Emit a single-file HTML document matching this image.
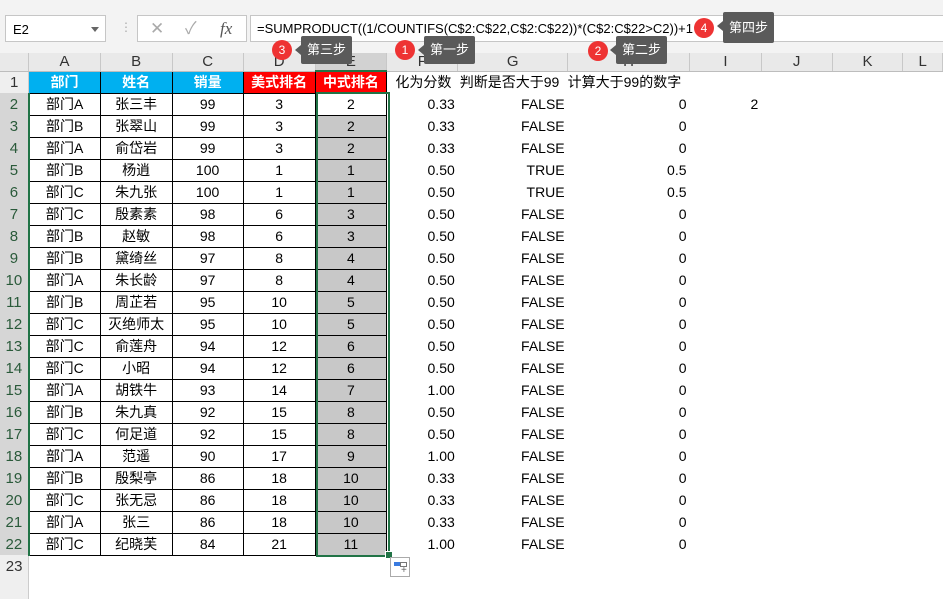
<html><head><style>
body{margin:0;width:943px;height:583px;overflow:hidden;background:#fff;font-family:"Liberation Sans","Noto Sans CJK SC",sans-serif;position:relative}
.top{position:absolute;left:0;top:0;width:943px;height:53px;background:#f3f3f3}
.nb{position:absolute;left:5px;top:15px;width:101px;height:27px;background:#fff;border:1px solid #c6c6c6;font-size:13px;line-height:27px;box-sizing:border-box;padding-left:7px}
.nb:after{content:"";position:absolute;right:6px;top:11px;border:4px solid transparent;border-top:5px solid #666}
.fx{position:absolute;left:137px;top:15px;width:110px;height:27px;background:#fff;border:1px solid #c6c6c6;box-sizing:border-box;color:#aaa;font-size:17px;line-height:25px}
.fb{position:absolute;left:250px;top:15px;width:700px;height:27px;background:#fff;border:1px solid #c6c6c6;box-sizing:border-box;font-size:13px;line-height:25px;padding-left:6px}
table{position:absolute;left:0;top:53px;border-collapse:collapse;table-layout:fixed;font-size:14px}
tr{height:22px}
td{border:0;padding:0 3px;white-space:nowrap;overflow:visible}
tr.h{height:18px}
tr.h td{background:#e9e9e9;text-align:center;color:#333;border-right:1px solid #c8c8c8;border-bottom:1px solid #bdbdbd;font-size:15px;line-height:17px}
td.r{background:#d6d6d6;text-align:center;color:#2a5a3a;font-size:15px;padding:0;border-right:2px solid #217346}
td.r2{background:#efefef;text-align:center;color:#333;font-size:15px;padding:0;border-right:1px solid #ccc}
td.b{border:1px solid #000;text-align:center}
td.bl{background:#00b0f0;color:#fff;font-weight:bold}
td.rd{background:#f00;color:#fff;font-weight:bold}
td.g{background:#c8c8c8}
td.n{text-align:right}
.sel{position:absolute;left:316px;top:92px;width:70px;height:461px;border:2px solid #217346}
.cb{position:absolute;border-radius:50%;background:#ee3333;color:#fff;width:20px;height:20px;font-size:12px;text-align:center;line-height:20px}
.tip{position:absolute;background:#5a5a5a;color:#fff;font-size:13px;height:28px;line-height:28px;padding:0 6px;border-radius:2px}
.tip:before{content:"";position:absolute;left:-6px;top:9px;border:5px solid transparent;border-right:6px solid #5a5a5a;border-left:0}
</style></head><body>
<div class="top"></div>
<div class="nb">E2</div>
<div style="position:absolute;left:120px;top:20px;color:#aaa;font-size:12px">⋮</div>
<div class="fx"><span style="position:absolute;left:12px">✕</span><span style="position:absolute;left:47px">✓</span><span style="position:absolute;left:82px;color:#555;font-style:italic;font-family:'Liberation Serif',serif">fx</span></div>
<div class="fb">=SUMPRODUCT((1/COUNTIFS(C$2:C$22,C$2:C$22))*(C$2:C$22&gt;C2))+1</div>
<table>
<colgroup><col style="width:29px"><col style="width:72px"><col style="width:72px"><col style="width:72px"><col style="width:72px"><col style="width:72px"><col style="width:71px"><col style="width:110px"><col style="width:122px"><col style="width:73px"><col style="width:72px"><col style="width:72px"><col style="width:40px"></colgroup>
<tr class="h"><td style="background:#e9e9e9"></td><td>A</td><td>B</td><td>C</td><td>D</td><td style="background:#d2d2d2;border-bottom:2px solid #217346">E</td><td>F</td><td>G</td><td>H</td><td>I</td><td>J</td><td>K</td><td>L</td></tr>
<tr><td class="r2">1</td><td class="b bl">部门</td><td class="b bl">姓名</td><td class="b bl">销量</td><td class="b rd">美式排名</td><td class="b rd">中式排名</td><td style="padding-left:8px">化为分数</td><td style="padding-left:2px">判断是否大于99</td><td style="padding-left:0">计算大于99的数字</td><td></td><td></td><td></td><td></td></tr>
<tr><td class="r">2</td><td class="b">部门A</td><td class="b">张三丰</td><td class="b">99</td><td class="b">3</td><td class="b">2</td><td class="n">0.33</td><td class="n">FALSE</td><td class="n">0</td><td class="n">2</td><td></td><td></td><td></td></tr>
<tr><td class="r">3</td><td class="b">部门B</td><td class="b">张翠山</td><td class="b">99</td><td class="b">3</td><td class="b g">2</td><td class="n">0.33</td><td class="n">FALSE</td><td class="n">0</td><td></td><td></td><td></td><td></td></tr>
<tr><td class="r">4</td><td class="b">部门A</td><td class="b">俞岱岩</td><td class="b">99</td><td class="b">3</td><td class="b g">2</td><td class="n">0.33</td><td class="n">FALSE</td><td class="n">0</td><td></td><td></td><td></td><td></td></tr>
<tr><td class="r">5</td><td class="b">部门B</td><td class="b">杨逍</td><td class="b">100</td><td class="b">1</td><td class="b g">1</td><td class="n">0.50</td><td class="n">TRUE</td><td class="n">0.5</td><td></td><td></td><td></td><td></td></tr>
<tr><td class="r">6</td><td class="b">部门C</td><td class="b">朱九张</td><td class="b">100</td><td class="b">1</td><td class="b g">1</td><td class="n">0.50</td><td class="n">TRUE</td><td class="n">0.5</td><td></td><td></td><td></td><td></td></tr>
<tr><td class="r">7</td><td class="b">部门C</td><td class="b">殷素素</td><td class="b">98</td><td class="b">6</td><td class="b g">3</td><td class="n">0.50</td><td class="n">FALSE</td><td class="n">0</td><td></td><td></td><td></td><td></td></tr>
<tr><td class="r">8</td><td class="b">部门B</td><td class="b">赵敏</td><td class="b">98</td><td class="b">6</td><td class="b g">3</td><td class="n">0.50</td><td class="n">FALSE</td><td class="n">0</td><td></td><td></td><td></td><td></td></tr>
<tr><td class="r">9</td><td class="b">部门B</td><td class="b">黛绮丝</td><td class="b">97</td><td class="b">8</td><td class="b g">4</td><td class="n">0.50</td><td class="n">FALSE</td><td class="n">0</td><td></td><td></td><td></td><td></td></tr>
<tr><td class="r">10</td><td class="b">部门A</td><td class="b">朱长龄</td><td class="b">97</td><td class="b">8</td><td class="b g">4</td><td class="n">0.50</td><td class="n">FALSE</td><td class="n">0</td><td></td><td></td><td></td><td></td></tr>
<tr><td class="r">11</td><td class="b">部门B</td><td class="b">周芷若</td><td class="b">95</td><td class="b">10</td><td class="b g">5</td><td class="n">0.50</td><td class="n">FALSE</td><td class="n">0</td><td></td><td></td><td></td><td></td></tr>
<tr><td class="r">12</td><td class="b">部门C</td><td class="b">灭绝师太</td><td class="b">95</td><td class="b">10</td><td class="b g">5</td><td class="n">0.50</td><td class="n">FALSE</td><td class="n">0</td><td></td><td></td><td></td><td></td></tr>
<tr><td class="r">13</td><td class="b">部门C</td><td class="b">俞莲舟</td><td class="b">94</td><td class="b">12</td><td class="b g">6</td><td class="n">0.50</td><td class="n">FALSE</td><td class="n">0</td><td></td><td></td><td></td><td></td></tr>
<tr><td class="r">14</td><td class="b">部门C</td><td class="b">小昭</td><td class="b">94</td><td class="b">12</td><td class="b g">6</td><td class="n">0.50</td><td class="n">FALSE</td><td class="n">0</td><td></td><td></td><td></td><td></td></tr>
<tr><td class="r">15</td><td class="b">部门A</td><td class="b">胡铁牛</td><td class="b">93</td><td class="b">14</td><td class="b g">7</td><td class="n">1.00</td><td class="n">FALSE</td><td class="n">0</td><td></td><td></td><td></td><td></td></tr>
<tr><td class="r">16</td><td class="b">部门B</td><td class="b">朱九真</td><td class="b">92</td><td class="b">15</td><td class="b g">8</td><td class="n">0.50</td><td class="n">FALSE</td><td class="n">0</td><td></td><td></td><td></td><td></td></tr>
<tr><td class="r">17</td><td class="b">部门C</td><td class="b">何足道</td><td class="b">92</td><td class="b">15</td><td class="b g">8</td><td class="n">0.50</td><td class="n">FALSE</td><td class="n">0</td><td></td><td></td><td></td><td></td></tr>
<tr><td class="r">18</td><td class="b">部门A</td><td class="b">范遥</td><td class="b">90</td><td class="b">17</td><td class="b g">9</td><td class="n">1.00</td><td class="n">FALSE</td><td class="n">0</td><td></td><td></td><td></td><td></td></tr>
<tr><td class="r">19</td><td class="b">部门B</td><td class="b">殷梨亭</td><td class="b">86</td><td class="b">18</td><td class="b g">10</td><td class="n">0.33</td><td class="n">FALSE</td><td class="n">0</td><td></td><td></td><td></td><td></td></tr>
<tr><td class="r">20</td><td class="b">部门C</td><td class="b">张无忌</td><td class="b">86</td><td class="b">18</td><td class="b g">10</td><td class="n">0.33</td><td class="n">FALSE</td><td class="n">0</td><td></td><td></td><td></td><td></td></tr>
<tr><td class="r">21</td><td class="b">部门A</td><td class="b">张三</td><td class="b">86</td><td class="b">18</td><td class="b g">10</td><td class="n">0.33</td><td class="n">FALSE</td><td class="n">0</td><td></td><td></td><td></td><td></td></tr>
<tr><td class="r">22</td><td class="b">部门C</td><td class="b">纪晓芙</td><td class="b">84</td><td class="b">21</td><td class="b g">11</td><td class="n">1.00</td><td class="n">FALSE</td><td class="n">0</td><td></td><td></td><td></td><td></td></tr>
<tr><td class="r2">23</td><td></td><td></td><td></td><td></td><td></td><td></td><td></td><td></td><td></td><td></td><td></td><td></td></tr>
<tr><td class="r2"></td><td></td><td></td><td></td><td></td><td></td><td></td><td></td><td></td><td></td><td></td><td></td><td></td></tr>
</table>
<div class="sel"></div>
<div style="position:absolute;left:385px;top:551px;width:6px;height:6px;background:#217346;border:1px solid #fff"></div>
<div style="position:absolute;left:390px;top:557px;width:18px;height:18px;border:1px solid #aaa;background:#fff"><div style="position:absolute;left:3px;top:4px;width:6px;height:4px;background:#3a7be0"></div><div style="position:absolute;left:9px;top:4px;width:5px;height:3px;border:1px solid #777"></div><div style="position:absolute;left:10px;top:9px;color:#666;font-size:10px;line-height:8px">+</div></div>
<div class="cb" style="left:272px;top:40px">3</div><div class="tip" style="left:301px;top:36px">第三步</div>
<div class="cb" style="left:395px;top:40px">1</div><div class="tip" style="left:424px;top:36px">第一步</div>
<div class="cb" style="left:588px;top:41px">2</div><div class="tip" style="left:616px;top:36px">第二步</div>
<div class="cb" style="left:694px;top:18px">4</div><div class="tip" style="left:723px;top:12px;height:31px;line-height:31px">第四步</div>
</body></html>
